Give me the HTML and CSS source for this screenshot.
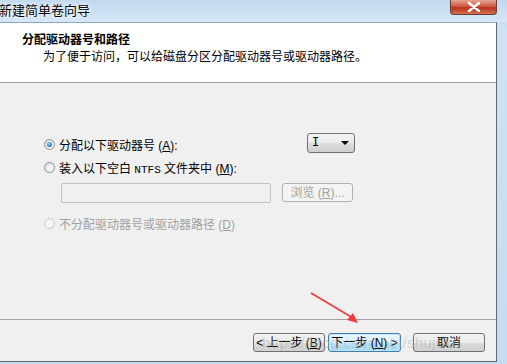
FILE: index.html
```html
<!DOCTYPE html>
<html lang="zh-CN">
<head>
    <meta charset="UTF-8">
    <title>新建简单卷向导</title>
    <link rel="stylesheet" href="styles.css">
</head>
<body>
    <div class="window">
        <div class="titlebar">
            <span class="title">新建简单卷向导</span>
            <span class="close">
                <svg width="14" height="10" viewBox="0 0 14 10"><path d="M2 1 L12 9 M12 1 L2 9" stroke="#fff" stroke-width="2.4" stroke-linecap="round"/></svg>
            </span>
        </div>

        <div class="client">
            <div class="header">
                <div class="heading">分配驱动器号和路径</div>
                <div class="subtitle">为了便于访问，可以给磁盘分区分配驱动器号或驱动器路径。</div>
            </div>

            <div class="content">
                <div class="options">
                    <div class="row">
                        <label class="radio"><span class="dot checked"></span><span>分配以下驱动器号 (<u>A</u>):</span></label>
                        <span class="dropdown">I<span class="arrow"></span></span>
                    </div>
                    <div class="row">
                        <label class="radio"><span class="dot"></span><span>装入以下空白 <span class="mono">NTFS</span> 文件夹中 (<u>M</u>):</span></label>
                    </div>
                    <div class="row path-row">
                        <span class="textbox"></span>
                        <span class="btn disabled"><span>浏览 (<u>R</u>)...</span></span>
                    </div>
                    <div class="row">
                        <label class="radio disabled"><span class="dot"></span><span>不分配驱动器号或驱动器路径 (<u>D</u>)</span></label>
                    </div>
                </div>
            </div>

            <div class="footer">
                <span class="btn"><span>&lt; 上一步 (<u>B</u>)</span></span>
                <span class="btn focused"><span>下一步 (<u>N</u>) &gt;</span></span>
                <span class="btn cancel">取消</span>
            </div>
        </div>

        <div class="watermark">https://blog.csdn.net/shujuku</div>
        <svg class="pointer" width="60" height="40" viewBox="0 0 60 40">
            <path d="M2 2 L44 27" stroke="#f03a3a" stroke-width="1.6"/>
            <path d="M49 32 L38 29 L44 22 Z" fill="#f03a3a"/>
        </svg>
    </div>
</body>
</html>
```

FILE: styles.css
```css
body {
    margin: 0;
    font-family: "Liberation Sans", "Noto Sans CJK SC", sans-serif;
    font-size: 12px;
    color: #000;
}

.window {
    position: relative;
    width: 507px;
    height: 364px;
    overflow: hidden;
    background: linear-gradient(to bottom, #bcd5ee, #cfe2f5 30px, #c5dbf1);
}

.titlebar {
    height: 22px;
    display: flex;
    align-items: flex-start;
    justify-content: space-between;
    background: linear-gradient(to bottom, #c1d8ef, #d6e7f8);
}

.title {
    font-size: 13px;
    line-height: 21px;
    margin-left: -1px;
    text-shadow: 0 0 6px #fff, 0 0 3px #fff;
}

.close {
    width: 45px;
    height: 14px;
    margin-right: 10px;
    border: 1px solid #6b3b35;
    border-top: none;
    border-radius: 0 0 4px 4px;
    background: linear-gradient(to bottom, #e6a593, #cf5a44 45%, #b8321b 55%, #d4704f);
    display: flex;
    align-items: center;
    justify-content: center;
}

.client {
    width: 496px;
    height: 338px;
    background: #f0f0f0;
    border-top: 1px solid #8fa6bf;
    border-right: 1px solid #5d6a78;
    border-bottom: 1px solid #5d6a78;
    display: flex;
    flex-direction: column;
}

.header {
    height: 60px;
    box-sizing: border-box;
    background: #fff;
    border-bottom: 1px solid #a0a0a0;
    padding-top: 8px;
}

.heading {
    font-weight: bold;
    padding-left: 22px;
    line-height: 18px;
}

.subtitle {
    padding-left: 43px;
    line-height: 16px;
}

.content {
    flex: 1;
    border-bottom: 1px solid #a0a0a0;
    padding: 50px 0 0 44px;
}

.options {
    width: 311px;
    display: flex;
    flex-direction: column;
}

.row {
    display: flex;
    align-items: center;
    justify-content: space-between;
    height: 23px;
}

.path-row {
    justify-content: flex-start;
    gap: 11px;
    padding-left: 17px;
    height: 27px;
    margin-bottom: 6px;
}

.radio {
    display: flex;
    align-items: center;
    gap: 4px;
}

.radio.disabled {
    color: #a0a0a0;
}

.mono {
    font-family: "Liberation Mono", monospace;
    font-size: 11px;
}

.dot {
    width: 11px;
    height: 11px;
    box-sizing: border-box;
    border-radius: 50%;
    border: 1px solid #8e8f8f;
    background: radial-gradient(circle at 60% 65%, #ffffff, #dcdcdc 80%);
    position: relative;
}

.dot.checked::after {
    content: "";
    position: absolute;
    left: 2px;
    top: 2px;
    width: 5px;
    height: 5px;
    border-radius: 50%;
    background: radial-gradient(circle at 40% 35%, #9ad9ff, #1a6fb8 70%, #0e3f7a);
}

.radio.disabled .dot {
    border-color: #c8c8c8;
    background: #f4f4f4;
}

.dropdown {
    width: 48px;
    height: 20px;
    box-sizing: border-box;
    border: 1px solid #707070;
    border-radius: 3px;
    background: linear-gradient(to bottom, #f3f3f3, #ebebeb 50%, #dcdcdc 51%, #cfcfcf);
    display: flex;
    align-items: center;
    justify-content: space-between;
    padding: 0 5px 0 4px;
    font-family: "Liberation Mono", monospace;
    font-size: 12px;
    margin-top: -4px;
}

.arrow {
    width: 0;
    height: 0;
    border-left: 4px solid transparent;
    border-right: 4px solid transparent;
    border-top: 4px solid #000;
}

.textbox {
    width: 210px;
    height: 20px;
    box-sizing: border-box;
    border: 1px solid #c3c3c3;
    border-radius: 2px;
    background: #f0f0f0;
}

.btn {
    height: 19px;
    box-sizing: border-box;
    border: 1px solid #707070;
    border-radius: 3px;
    background: linear-gradient(to bottom, #f2f2f2, #ebebeb 50%, #dddddd 51%, #cfcfcf);
    display: flex;
    align-items: center;
    justify-content: center;
    white-space: nowrap;
    line-height: 1;
}

.btn.disabled {
    width: 71px;
    border-color: #adb2b5;
    background: #f4f4f4;
    color: #a0a0a0;
}

.footer {
    height: 41px;
    display: flex;
    align-items: flex-start;
    padding: 13px 0 0 253px;
    box-sizing: border-box;
}

.footer .btn {
    width: 72px;
}

.footer .btn.focused {
    margin-left: 3px;
    width: 73px;
    border-color: #3c7fb1;
    background: linear-gradient(to bottom, #eaf6fd, #d9f0fc 50%, #bee6fd 51%, #a7d9f5);
    box-shadow: inset 0 0 0 1px #c4e5f6;
}

.footer .btn.cancel {
    margin-left: 12px;
}

.watermark {
    position: absolute;
    left: 262px;
    top: 334px;
    font-size: 15px;
    color: rgba(170, 170, 170, 0.45);
    letter-spacing: 0.3px;
}

.pointer {
    position: absolute;
    left: 309px;
    top: 291px;
}
```
